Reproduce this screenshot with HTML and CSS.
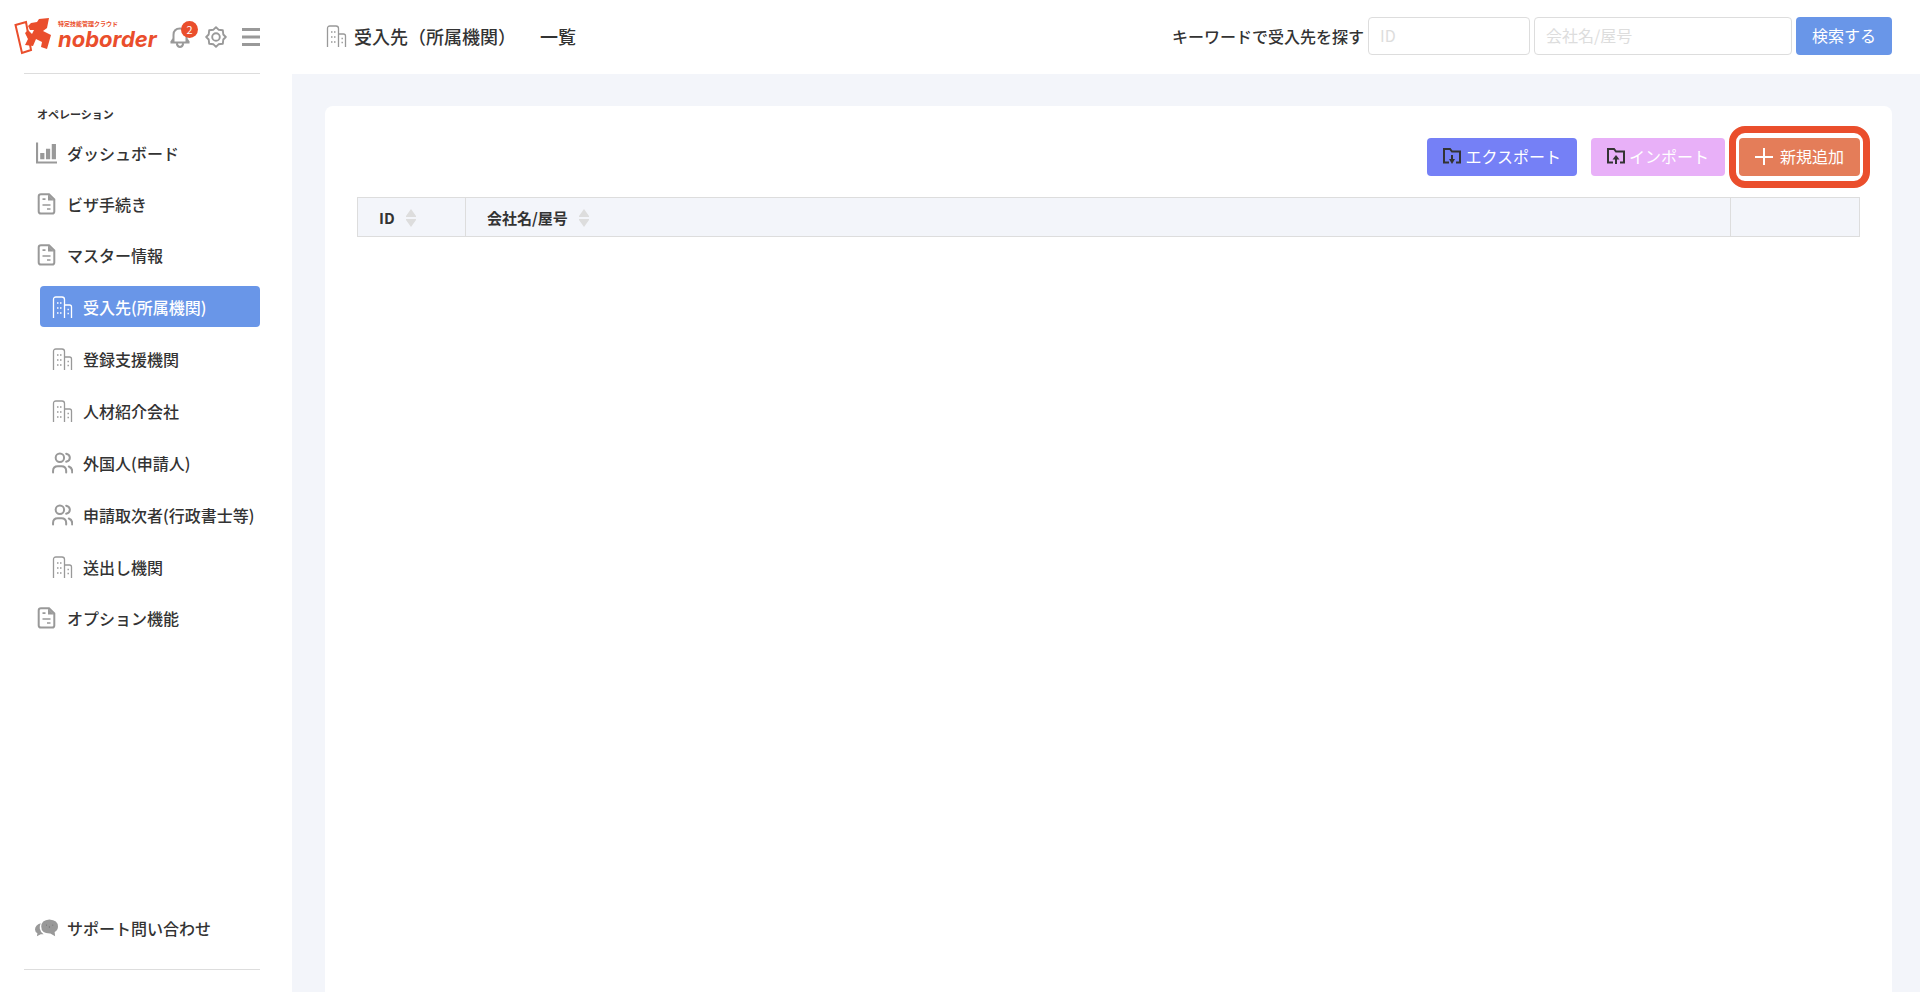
FILE: index.html
```
<!DOCTYPE html>
<html lang="ja">
<head>
    <meta charset="UTF-8">
    <meta name="viewport" content="width=device-width, initial-scale=1.0">
    <title>受入先（所属機関） 一覧 | noborder</title>
    <link rel="stylesheet" href="styles.css">
</head>
<body>
    <!-- shared icons -->
    <svg class="sprite" aria-hidden="true">
        <symbol id="icon-building" viewBox="0 0 20 22">
            <g fill="none" stroke="currentColor" stroke-width="1.3">
                <path d="M1 22V3.500Q1 1 3.500 1H9.500Q12 1 12 3.500V22M12 9H17Q19 9 19 11V22"/>
                <path d="M4.500 7H6M7.500 7H9M4.500 12H6M7.500 12H9M4.500 17H6M7.500 17H9M15 13.500H16.400M15 17.500H16.400" stroke-width="1.6"/>
            </g>
        </symbol>
        <symbol id="icon-file" viewBox="0 0 18 22">
            <path d="M3.500 1.200H11.500L16.800 6.500V18.500Q16.800 20.600 14.700 20.600H3.500Q1.200 20.600 1.200 18.500V3.400Q1.200 1.200 3.500 1.200Z" fill="none" stroke="currentColor" stroke-width="2"/>
            <path d="M10.500 1.500V7.500H16.500Z" fill="currentColor"/>
            <path d="M5 6.200H8M5 12H13M9.500 16H13" fill="none" stroke="currentColor" stroke-width="1.7"/>
        </symbol>
        <symbol id="icon-users" viewBox="0 0 20 20">
            <g fill="none" stroke="currentColor" stroke-width="1.9" stroke-linecap="round">
                <circle cx="7.500" cy="5" r="4"/>
                <path d="M1 19V17.500Q1 13 5.500 13H9Q13.500 13 13.500 17.500V19M13.500 1.200Q17 2 17 5T13.500 8.800M16 13.300Q19.200 14.500 19.200 17.500V19"/>
            </g>
        </symbol>
        <symbol id="icon-sort" viewBox="0 0 10 18">
            <path d="M5 0L10 7V8H0V7ZM0 10H10V11L5 18L0 11Z" fill="currentColor"/>
        </symbol>
    </svg>

    <div class="layout">
        <aside class="sidebar">
            <div class="brand">
                <a class="logo" href="#" aria-label="noborder">
                    <svg class="logo-mark" viewBox="0 0 37 37" aria-hidden="true">
                        <path d="M1.500 7L12 4L17 32L8 35Z" fill="#fff" stroke="#ea4e2c" stroke-width="2"/>
                        <path d="M25 1L35 0L33 10L29 13L37 17L33 31L27 29L28 24L22 21L19 28L11 27L14 21L11 15L14 12L18 16L20 12L16 12L14 8L17 5L23 4Z" fill="#ea4e2c"/>
                    </svg>
                    <span class="logo-text">
                        <span class="logo-sub">特定技能管理クラウド</span>
                        <span class="logo-name">noborder</span>
                    </span>
                </a>
                <button class="icon-button bell" type="button" aria-label="お知らせ">
                    <svg width="20" height="22" viewBox="0 0 20 22" fill="none" stroke="currentColor" stroke-width="2" aria-hidden="true">
                        <path d="M0.500 16.500H19.500M3.500 16V9Q3.500 2.500 10 2.500T16.500 9V16M3.500 12.500L1 16.500M16.500 12.500L19 16.500M6.800 17.500Q7.500 21 10 21T13.200 17.500"/>
                    </svg>
                    <span class="badge">2</span>
                </button>
                <button class="icon-button" type="button" aria-label="設定">
                    <svg width="22" height="22" viewBox="0 0 22 22" fill="none" stroke="currentColor" stroke-width="1.900" aria-hidden="true">
                        <path d="M11 1.200L13.500 3.700L17.800 4.200L18.300 8.500L20.800 11L18.300 13.500L17.800 17.800L13.500 18.300L11 20.800L8.500 18.300L4.200 17.800L3.700 13.500L1.200 11L3.700 8.500L4.200 4.200L8.500 3.700Z" stroke-linejoin="round"/>
                        <circle cx="11" cy="11" r="3.800"/>
                    </svg>
                </button>
                <button class="icon-button" type="button" aria-label="メニュー">
                    <svg width="18" height="18" viewBox="0 0 18 18" fill="currentColor" aria-hidden="true">
                        <path d="M0 0H18V3H0ZM0 7.500H18V10.500H0ZM0 15H18V18H0Z"/>
                    </svg>
                </button>
            </div>

            <nav class="nav">
                <p class="nav-heading">オペレーション</p>
                <ul class="nav-list">
                    <li>
                        <a class="nav-link" href="#">
                            <svg class="icon" viewBox="0 0 20 20" fill="currentColor" aria-hidden="true">
                                <path d="M0 0H2V18H20V20H0ZM4 10H8V16H4ZM9.500 6H13.500V16H9.500ZM15 1.500H19V16H15Z"/>
                            </svg>
                            ダッシュボード
                        </a>
                    </li>
                    <li><a class="nav-link" href="#"><svg class="icon"><use href="#icon-file"/></svg>ビザ手続き</a></li>
                    <li>
                        <a class="nav-link" href="#"><svg class="icon"><use href="#icon-file"/></svg>マスター情報</a>
                        <ul class="sub-list">
                            <li><a class="nav-link active" href="#" aria-current="page"><svg class="icon"><use href="#icon-building"/></svg>受入先(所属機関)</a></li>
                            <li><a class="nav-link" href="#"><svg class="icon"><use href="#icon-building"/></svg>登録支援機関</a></li>
                            <li><a class="nav-link" href="#"><svg class="icon"><use href="#icon-building"/></svg>人材紹介会社</a></li>
                            <li><a class="nav-link" href="#"><svg class="icon"><use href="#icon-users"/></svg>外国人(申請人)</a></li>
                            <li><a class="nav-link" href="#"><svg class="icon"><use href="#icon-users"/></svg>申請取次者(行政書士等)</a></li>
                            <li><a class="nav-link" href="#"><svg class="icon"><use href="#icon-building"/></svg>送出し機関</a></li>
                        </ul>
                    </li>
                    <li><a class="nav-link" href="#"><svg class="icon"><use href="#icon-file"/></svg>オプション機能</a></li>
                </ul>
            </nav>

            <div class="support">
                <a class="nav-link" href="#">
                    <svg class="icon icon-chat" viewBox="0 0 24 18" fill="currentColor" aria-hidden="true">
                        <path d="M6 4Q0 6 0 10.500Q0 13 2.500 14.500L2 17.500L6 15.500L9 15.500Q5.500 13 5 9.500Q4.800 6.500 6 4Z"/>
                        <path d="M15 0Q24 0.500 24 7.500Q24 11.500 20.500 13.300L21 17.500L16 14.800Q6.500 15 6.500 7.500Q6.500 0.500 15 0Z"/>
                        <path d="M11.500 5.500h1v1h-1zM18 5.500h1v1h-1zM14.500 7.500h1v1h-1z" fill="#666"/>
                    </svg>
                    サポート問い合わせ
                </a>
            </div>
        </aside>

        <div class="main">
            <header class="header">
                <h1 class="title">
                    <svg class="icon"><use href="#icon-building"/></svg>
                    <span>受入先（所属機関）</span>
                    <span class="title-sub">一覧</span>
                </h1>
                <form class="search">
                    <label class="search-label" for="searchId">キーワードで受入先を探す</label>
                    <input class="input input-id" type="text" id="searchId" name="id" placeholder="ID">
                    <input class="input input-name" type="text" id="searchName" name="name" placeholder="会社名/屋号" aria-label="会社名/屋号">
                    <button class="btn btn-search" type="submit">検索する</button>
                </form>
            </header>

            <main class="content">
                <div class="card">
                    <div class="actions">
                        <button class="btn btn-export" type="button">
                            <svg width="18" height="16" viewBox="0 0 18 16" fill="none" stroke="#333" stroke-width="2" aria-hidden="true">
                                <path d="M6 14.500H1V1H7L9 3.500H17V14.500H13"/>
                                <path d="M9 7V14"/>
                                <path d="M6 11H12L9 16Z" fill="#333" stroke="none"/>
                            </svg>
                            エクスポート
                        </button>
                        <button class="btn btn-import" type="button">
                            <svg width="18" height="16" viewBox="0 0 18 16" fill="none" stroke="#333" stroke-width="2" aria-hidden="true">
                                <path d="M6 14.500H1V1H7L9 3.500H17V14.500H13"/>
                                <path d="M9 16V9"/>
                                <path d="M5.500 11.500H12.500L9 7Z" fill="#333" stroke="none"/>
                            </svg>
                            インポート
                        </button>
                        <button class="btn btn-add" type="button">
                            <svg width="18" height="18" viewBox="0 0 18 18" stroke="#fff" stroke-width="2" aria-hidden="true">
                                <path d="M9 1V18M0 10H18"/>
                            </svg>
                            新規追加
                        </button>
                    </div>
                    <table class="table">
                        <thead>
                            <tr>
                                <th class="col-id" scope="col"><span class="th-inner">ID <svg class="sort"><use href="#icon-sort"/></svg></span></th>
                                <th scope="col"><span class="th-inner">会社名/屋号 <svg class="sort"><use href="#icon-sort"/></svg></span></th>
                                <td class="col-action"></td>
                            </tr>
                        </thead>
                    </table>
                </div>
            </main>
        </div>
    </div>
</body>
</html>
```
FILE: styles.css
```
* {
    box-sizing: border-box;
}
body {
    margin: 0;
    font-family: "Noto Sans CJK JP", sans-serif;
    font-size: 16px;
    line-height: 24px;
    color: #333;
    background-color: #f3f5fa;
}
ul, p, h1 {
    margin: 0;
    padding: 0;
}
ul {
    list-style: none;
}
svg {
    display: block;
    flex-shrink: 0;
}
button {
    font: inherit;
    cursor: pointer;
}
.sprite {
    position: absolute;
    width: 0;
    height: 0;
}
.layout {
    display: flex;
    min-height: 100vh;
}

/* sidebar */
.sidebar {
    display: flex;
    flex-direction: column;
    flex-shrink: 0;
    width: 292px;
    padding: 0 32px 22px 24px;
    background: #fff;
}
.brand {
    display: flex;
    align-items: center;
    height: 73px;
    margin-left: -10px;
    gap: 15px;
}
.logo {
    display: flex;
    gap: 7px;
    margin-right: auto;
    color: #ea4e2c;
    text-decoration: none;
}
.logo-mark {
    width: 37px;
    height: 37px;
}
.logo-text {
    display: flex;
    flex-direction: column;
    width: 96px;
}
.logo-sub {
    font-size: 6px;
    font-weight: 700;
    line-height: 11px;
}
.logo-name {
    font-family: Inter, sans-serif;
    font-size: 22px;
    font-style: italic;
    font-weight: 700;
    line-height: 20px;
}
.icon-button {
    position: relative;
    padding: 0;
    border: none;
    background: none;
    color: #999;
}
.badge {
    position: absolute;
    top: -5px;
    right: -8px;
    width: 17px;
    height: 17px;
    border-radius: 50%;
    background: #ea4e2c;
    color: #fff;
    font-size: 11px;
    line-height: 17px;
}
.nav {
    padding-top: 32px;
    border-top: 1px solid #ddd;
}
.nav-heading {
    padding-left: 13px;
    margin-bottom: 10px;
    font-size: 11px;
    font-weight: 700;
    line-height: 16px;
}
.nav-list {
    display: flex;
    flex-direction: column;
    gap: 10px;
}
.nav-link {
    display: flex;
    align-items: center;
    gap: 10px;
    height: 41px;
    padding-left: 12px;
    border-radius: 4px;
    color: #333;
    font-weight: 500;
    text-decoration: none;
    white-space: nowrap;
}
.icon {
    width: 21px;
    height: 22px;
    color: #999;
}
.sub-list {
    display: flex;
    flex-direction: column;
    gap: 11px;
    margin: 11px 0 0 16px;
}
.nav-link.active {
    background: #6996e8;
    color: #fff;
}
.nav-link.active .icon {
    color: #fff;
}
.support {
    margin-top: auto;
    padding-bottom: 21px;
    border-bottom: 1px solid #ddd;
}
.support .nav-link {
    gap: 9px;
    padding-left: 11px;
}
.icon-chat {
    width: 23px;
}

/* header */
.main {
    flex: 1;
    min-width: 0;
}
.header {
    display: flex;
    align-items: center;
    justify-content: space-between;
    height: 74px;
    padding: 0 28px 2px 34px;
    background: #fff;
}
.title {
    display: flex;
    align-items: center;
    gap: 7px;
    font-size: 18px;
    font-weight: 500;
}
.title-sub {
    margin-left: 17px;
}
.search {
    display: flex;
    align-items: center;
    gap: 4px;
}
.search-label {
    font-weight: 500;
}
.input {
    height: 38px;
    padding: 0 11px 2px;
    border: 1px solid #ddd;
    border-radius: 4px;
    font: inherit;
}
.input::placeholder {
    color: #ddd;
}
.input-id {
    width: 162px;
}
.input-name {
    width: 258px;
}
.btn {
    display: flex;
    align-items: center;
    gap: 4px;
    height: 38px;
    padding: 0 16px 2px;
    border: none;
    border-radius: 4px;
    color: #fff;
}
.btn-search {
    background: #6996e8;
}

/* list */
.content {
    display: flex;
    min-height: calc(100vh - 74px);
    padding: 32px 28px 0 33px;
}
.card {
    flex: 1;
    padding: 32px;
    border-radius: 8px 8px 0 0;
    background: #fff;
}
.actions {
    display: flex;
    justify-content: flex-end;
    gap: 14px;
    margin-bottom: 21px;
}
.btn-export {
    background: #7580f6;
}
.btn-import {
    background: #e8b0f8;
}
.btn-add {
    position: relative;
    gap: 7px;
    background: #e47d59;
}
/* highlight ring around the add button */
.btn-add::after {
    content: "";
    position: absolute;
    inset: -12px -10px;
    border: 7px solid #ea4e2c;
    border-radius: 16px;
    pointer-events: none;
}
.table {
    width: 100%;
    border-collapse: collapse;
}
.table th, .table td {
    height: 39px;
    padding: 1px 21px 0;
    border: 1px solid #ddd;
    background: #f3f5fa;
    font-size: 15px;
    font-weight: 700;
    text-align: left;
}
.th-inner {
    display: flex;
    align-items: center;
    gap: 11px;
}
.sort {
    width: 10px;
    height: 18px;
    color: #ddd;
}
.table .col-id {
    width: 108px;
}
.table .col-action {
    width: 129px;
}
```
